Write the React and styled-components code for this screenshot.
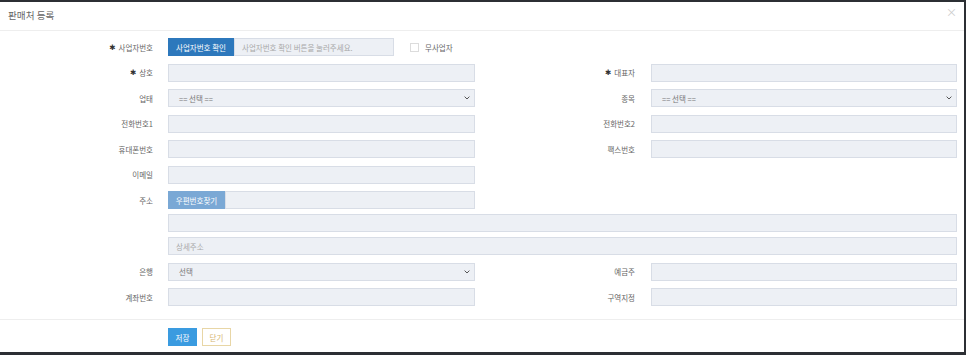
import React from 'react'
import styled, { createGlobalStyle } from 'styled-components'

const GlobalStyle = createGlobalStyle`
  html, body {
    margin: 0;
    padding: 0;
    background: #3d3f43;
  }
  body {
    font-family: 'Noto Sans CJK KR', 'Noto Sans', sans-serif;
    color: #555;
  }
`

const Backdrop = styled.div`
  width: 966px;
  height: 355px;
  padding: 2px 2px 3px 0;
  box-sizing: border-box;
  background: #2c2f34;
`

const Modal = styled.div`
  width: 964px;
  height: 350px;
  background: #fff;
  display: flex;
  flex-direction: column;
`

const Header = styled.div`
  height: 28px;
  display: flex;
  align-items: center;
  justify-content: space-between;
  padding: 0 8px;
  border-bottom: 1px solid #eeeeee;
`

const Title = styled.h4`
  margin: 0;
  font-size: 9.6px;
  font-weight: 400;
  color: #666;
  line-height: 1;
`

const Close = styled.span`
  font-size: 11px;
  color: #cccccc;
  line-height: 1;
  margin-top: -8px;
  margin-right: -1px;
`

const Body = styled.div`
  flex: 1;
  padding: 7px 0 0;
  display: flex;
  flex-direction: column;
  gap: 7.5px;
`

const Row = styled.div`
  display: grid;
  grid-template-columns: 168px 307px 176px 306px;
  height: 18px;
  margin-top: ${p => (p.$tight ? '-2.5px' : '0')};
`

const Label = styled.label`
  font-size: 7.5px;
  color: #666;
  text-align: right;
  padding-right: ${p => (p.$right ? '16px' : '15px')};
  display: flex;
  align-items: center;
  justify-content: flex-end;
  gap: 3px;
  white-space: nowrap;
`

const Star = styled.span`
  font-family: 'DejaVu Sans', sans-serif;
  font-size: 7.5px;
  color: #333;
`

const Field = styled.div`
  grid-column: ${p => (p.$wide ? '2 / 5' : 'auto')};
  display: flex;
  align-items: stretch;
  position: relative;
`

const Input = styled.div`
  flex: 1;
  box-sizing: border-box;
  height: 18px;
  background: #edf0f5;
  border: 1px solid #d8dde6;
  font-size: 7.5px;
  color: #a8a8a8;
  display: flex;
  align-items: center;
  padding-left: ${p => (p.$pad ? p.$pad : '7px')};
  white-space: nowrap;
`

const SelectText = styled.span`
  color: #777;
`

const Chevron = styled.svg`
  position: absolute;
  right: 5px;
  top: 7px;
`

const AddonButton = styled.div`
  background: ${p => (p.$light ? '#7aa8d5' : '#2d78bc')};
  color: #fff;
  font-size: 7.5px;
  display: flex;
  align-items: center;
  justify-content: center;
  width: ${p => p.$w}px;
  height: 18px;
  white-space: nowrap;
  flex: none;
`

const BizGroup = styled.div`
  display: flex;
  width: 226px;
`

const CheckWrap = styled.div`
  display: flex;
  align-items: center;
  margin-left: 16px;
  gap: 6px;
  font-size: 7.5px;
  color: #666;
`

const CheckBox = styled.span`
  width: 9px;
  height: 9px;
  box-sizing: border-box;
  border: 1px solid #dcdcdc;
  background: #fff;
`

const Footer = styled.div`
  height: 33px;
  box-sizing: border-box;
  border-top: 1px solid #eeeeee;
  padding: 8px 0 0 168px;
  display: flex;
  gap: 5px;
`

const FooterButton = styled.div`
  width: 29px;
  height: 18px;
  box-sizing: border-box;
  font-size: 7.5px;
  display: flex;
  align-items: center;
  justify-content: center;
  background: ${p => (p.$primary ? '#3a9be0' : '#fff')};
  color: ${p => (p.$primary ? '#fff' : '#d6b56f')};
  border: 1px solid ${p => (p.$primary ? '#3a9be0' : '#e8d6a6')};
`

const Caret = () => (
  <Chevron width='6' height='4' viewBox='0 0 6 4'>
    <path d='M0.6 0.6 L3 3 L5.4 0.6' fill='none' stroke='#555' strokeWidth='1' />
  </Chevron>
)

const TextField = ({ placeholder, wide }) => (
  <Field $wide={wide}>
    <Input>{placeholder}</Input>
  </Field>
)

const SelectField = ({ value }) => (
  <Field>
    <Input $pad='10px'><SelectText>{value}</SelectText></Input>
    <Caret />
  </Field>
)

const FormLabel = ({ children, required, right }) => (
  <Label $right={right}>
    {required && <Star>✱</Star>}
    {children}
  </Label>
)

export default function App () {
  return (
    <>
      <GlobalStyle />
      <Backdrop>
        <Modal>
          <Header>
            <Title>판매처 등록</Title>
            <Close>×</Close>
          </Header>
          <Body>
            <Row>
              <FormLabel required>사업자번호</FormLabel>
              <Field>
                <BizGroup>
                  <AddonButton $w={66}>사업자번호 확인</AddonButton>
                  <Input>사업자번호 확인 버튼을 눌러주세요.</Input>
                </BizGroup>
                <CheckWrap>
                  <CheckBox />
                  무사업자
                </CheckWrap>
              </Field>
            </Row>
            <Row>
              <FormLabel required>상호</FormLabel>
              <TextField />
              <FormLabel required right>대표자</FormLabel>
              <TextField />
            </Row>
            <Row>
              <FormLabel>업태</FormLabel>
              <SelectField value='== 선택 ==' />
              <FormLabel right>종목</FormLabel>
              <SelectField value='== 선택 ==' />
            </Row>
            <Row>
              <FormLabel>전화번호1</FormLabel>
              <TextField />
              <FormLabel right>전화번호2</FormLabel>
              <TextField />
            </Row>
            <Row>
              <FormLabel>휴대폰번호</FormLabel>
              <TextField />
              <FormLabel right>팩스번호</FormLabel>
              <TextField />
            </Row>
            <Row>
              <FormLabel>이메일</FormLabel>
              <TextField />
            </Row>
            <Row>
              <FormLabel>주소</FormLabel>
              <Field>
                <AddonButton $light $w={57}>우편번호찾기</AddonButton>
                <Input />
              </Field>
            </Row>
            <Row $tight>
              <span />
              <TextField wide />
            </Row>
            <Row $tight>
              <span />
              <TextField wide placeholder='상세주소' />
            </Row>
            <Row>
              <FormLabel>은행</FormLabel>
              <SelectField value='선택' />
              <FormLabel right>예금주</FormLabel>
              <TextField />
            </Row>
            <Row>
              <FormLabel>계좌번호</FormLabel>
              <TextField />
              <FormLabel right>구역지정</FormLabel>
              <TextField />
            </Row>
          </Body>
          <Footer>
            <FooterButton $primary>저장</FooterButton>
            <FooterButton>닫기</FooterButton>
          </Footer>
        </Modal>
      </Backdrop>
    </>
  )
}
